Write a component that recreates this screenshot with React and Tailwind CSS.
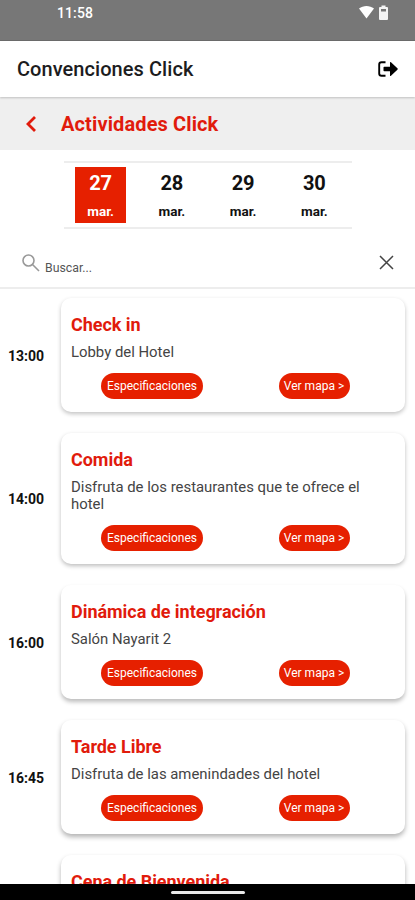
import { clsx } from 'clsx';

const days = [
    { number: "27", month: "mar.", active: true },
    { number: "28", month: "mar." },
    { number: "29", month: "mar." },
    { number: "30", month: "mar." },
];

// cards lower on the screen cast a deeper shadow
const activities = [
    { time: "13:00", title: "Check in", description: "Lobby del Hotel", height: "h-[114px]", shadow: "shadow-[0_2px_4px_rgba(0,0,0,0.24)]" },
    { time: "14:00", title: "Comida", description: "Disfruta de los restaurantes que te ofrece el hotel", height: "h-[131px]", shadow: "shadow-[0_2px_4px_rgba(0,0,0,0.26)]" },
    { time: "16:00", title: "Dinámica de integración", description: "Salón Nayarit 2", height: "h-[114px]", shadow: "shadow-[0_3px_4px_rgba(0,0,0,0.26)]" },
    { time: "16:45", title: "Tarde Libre", description: "Disfruta de las amenindades del hotel", height: "h-[114px]", shadow: "shadow-[0_3px_5px_rgba(0,0,0,0.3)]" },
    { time: "", title: "Cena de Bienvenida", description: "", height: "h-[114px]", shadow: "shadow-[0_3px_5px_rgba(0,0,0,0.3)]" },
];

function StatusBar() {
    return (
        <div className="flex h-[41px] shrink-0 items-start justify-between border-b border-[#6c6c6c] bg-[#777777] pt-[5px] pr-[27px] pl-[57px]">
            <span className="text-[14px] leading-4 font-medium tracking-[0.1px] text-white">11:58</span>
            <div className="flex items-start gap-[5px]">
                <svg width="15" height="14" viewBox="0 0 15 14" fill="#fff">
                    <path d="M0 3.600C4.200 0 10.800 0 15 3.600L7.500 13.400z" />
                </svg>
                <svg width="9" height="15" viewBox="0 0 9 15">
                    <path d="M2.500 .5h4V2H8q1 0 1 1v11q0 1-1 1H1q-1 0-1-1V3q0-1 1-1h1.500z" fill="#f4f4f4" />
                    <path d="M2 4h5v2.500H2z" fill="#777" />
                </svg>
            </div>
        </div>
    );
}

function Header() {
    return (
        <div className="z-10 flex h-14 shrink-0 items-center justify-between bg-white pr-[17px] pl-[17px] shadow-[0_1px_2px_rgba(0,0,0,0.2)]">
            <h1 className="text-[20px] leading-6 font-medium tracking-[0.06px] text-[#1c1c1e]">Convenciones Click</h1>
            <svg width="20" height="16" viewBox="0 0 20 16">
                <path d="M7.500 1.200H3.500Q1.200 1.200 1.200 3.500v9q0 2.300 2.300 2.300h4" fill="none" stroke="#000" strokeWidth="1.900" />
                <path d="M6.300 5.700H12V1.600q0-1.200 1-.3l6.400 6q.7.700 0 1.400l-6.400 6q-1 .9-1-.3v-4.100H6.300q-.8 0-.8-.8V6.500q0-.8.8-.8z" fill="#000" />
            </svg>
        </div>
    );
}

function ActivityCard({ activity }) {
    return (
        <div className="flex shrink-0 items-center pr-[10px]">
            <p className="w-[61px] pt-px pl-2 text-[14px] leading-4 font-bold text-[#111]">{activity.time}</p>
            <div className={clsx("flex-1 rounded-[10px] bg-white px-[10px] pt-[15px]", activity.height, activity.shadow)}>
                <h3 className="text-[18px] leading-[23px] font-bold tracking-[-0.04px] text-[#e11b0c]">{activity.title}</h3>
                <p className="mt-2 min-h-[17px] text-[14.900px] leading-[17px] text-[#444]">{activity.description}</p>
                <div className="mt-3 flex items-center">
                    <div className="flex w-1/2 justify-center">
                        <button className="h-[26px] w-[102px] rounded-full bg-[#e62000] text-[12px] whitespace-nowrap text-white">Especificaciones</button>
                    </div>
                    <div className="flex w-1/2 justify-center">
                        <button className="h-[26px] w-[71px] rounded-full bg-[#e62000] text-[12px] whitespace-nowrap text-white">Ver mapa &gt;</button>
                    </div>
                </div>
            </div>
        </div>
    );
}

export default function App() {
    return (
        <div className="flex h-[900px] w-[415px] flex-col overflow-hidden bg-white font-['Roboto',sans-serif]">
            <StatusBar />
            <Header />
            <div className="flex h-[53px] shrink-0 items-center bg-[#efefef] pl-[25px]">
                <svg width="12" height="18" viewBox="0 0 12 18" fill="none" stroke="#e11b0c" strokeWidth="2.800">
                    <path d="M10 2L3 9l7 7" />
                </svg>
                <h2 className="pt-px pl-6 text-[20px] leading-6 font-bold tracking-[0.12px] text-[#e11b0c]">Actividades Click</h2>
            </div>
            <div className="mt-[11px] mr-[63px] ml-16 grid h-[68px] shrink-0 grid-cols-4 items-center justify-items-center border-y-2 border-[#ededed] pr-[2px] pl-px">
                {days.map((day) => (
                    <div key={day.number} className={clsx("flex h-14 w-[51px] flex-col items-center", day.active ? "bg-[#e62000] text-white" : "text-[#111]")}>
                        <p className="pt-[3px] text-[20px] leading-[26px] font-bold">{day.number}</p>
                        <p className="pt-[7px] text-[13.500px] leading-4 font-bold">{day.month}</p>
                    </div>
                ))}
            </div>
            <div className="flex h-[60px] shrink-0 items-center border-b-2 border-[#ededed] pt-[9px] pr-[21px] pl-[22px]">
                <svg width="18" height="18" viewBox="0 0 18 18" fill="none" stroke="#999" strokeWidth="1.600">
                    <circle cx="6.500" cy="6.500" r="5.500" />
                    <path d="M10.500 10.500l6.500 6.500" />
                </svg>
                <p className="flex-1 pt-[10px] pl-[5px] text-[12.300px] leading-4 text-[#555]">Buscar...</p>
                <svg width="15" height="15" viewBox="0 0 15 15" fill="none" stroke="#444" strokeWidth="1.500">
                    <path d="M1 1l13 13M14 1L1 14" />
                </svg>
            </div>
            <div className="flex min-h-0 flex-1 flex-col gap-[21px] overflow-hidden pt-[9px]">
                {activities.map((activity) => (
                    <ActivityCard key={activity.title} activity={activity} />
                ))}
            </div>
            <div className="flex h-4 shrink-0 justify-center bg-black pt-[7px]">
                <div className="h-[3px] w-[74px] rounded-full bg-[#e8e8e8]" />
            </div>
        </div>
    );
}
